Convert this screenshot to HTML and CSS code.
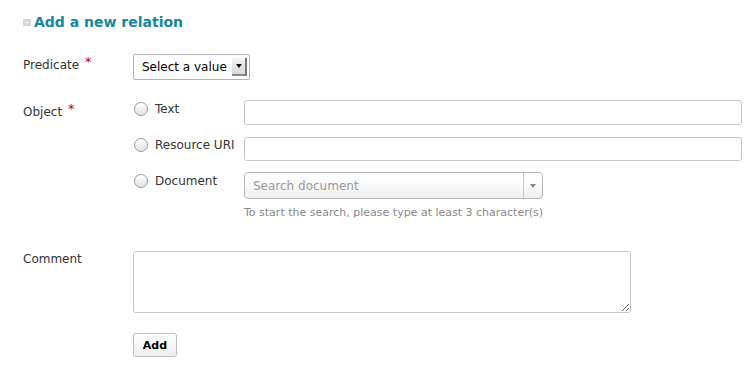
FILE: index.html
```html
<!DOCTYPE html>
<html lang="en">
<head>
  <meta charset="UTF-8">
  <title>Add a new relation</title>
  <link rel="stylesheet" href="styles.css">
</head>
<body>
  <div class="page">
    <h2 class="title"><span class="collapse-icon"></span>Add a new relation</h2>

    <div class="form-row predicate-row">
      <div class="form-label">Predicate <span class="required">*</span></div>
      <div class="form-field">
        <div class="plain-select">
          <span class="plain-select-text">Select a value</span>
          <span class="plain-select-arrow"><span class="tri"></span></span>
        </div>
      </div>
    </div>

    <div class="form-row object-row">
      <div class="form-label object-label">Object <span class="required">*</span></div>
      <div class="form-field">
        <div class="option option-text">
          <div class="radio-wrap"><span class="radio"></span><span class="radio-label">Text</span></div>
          <input type="text" class="text-input">
        </div>
        <div class="option option-uri">
          <div class="radio-wrap"><span class="radio"></span><span class="radio-label">Resource URI</span></div>
          <input type="text" class="text-input uri-input">
        </div>
        <div class="option option-doc">
          <div class="radio-wrap"><span class="radio"></span><span class="radio-label">Document</span></div>
          <div class="doc-field">
            <div class="search-select">
              <span class="search-placeholder">Search document</span>
              <span class="search-arrow"><span class="tri small"></span></span>
            </div>
            <div class="help">To start the search, please type at least 3 character(s)</div>
          </div>
        </div>
      </div>
    </div>

    <div class="form-row comment-row">
      <div class="form-label comment-label">Comment</div>
      <div class="form-field">
        <textarea class="comment"></textarea>
      </div>
    </div>

    <div class="form-row actions">
      <div class="form-label"></div>
      <div class="form-field"><button class="add-button">Add</button></div>
    </div>
  </div>
</body>
</html>
```

FILE: styles.css
```css
/* base */
body {
  margin: 0;
  font-family: "DejaVu Sans", "Noto Sans", sans-serif;
  font-size: 12px;
  color: #333;
  background: #ffffff;
}

.page {
  padding: 12px 14px 0 23px;
}

.title {
  margin: 0;
  font-size: 14px;
  line-height: 20px;
  font-weight: bold;
  color: #17869f;
  display: flex;
  align-items: center;
}

.collapse-icon {
  width: 8px;
  height: 7px;
  background: #d9d9d9;
  margin: 1px 3px 0 0;
  position: relative;
}

.collapse-icon::after {
  content: "";
  position: absolute;
  left: 2px;
  right: 2px;
  top: 3px;
  height: 1px;
  background: #f4f4f4;
}

/* rows */
.form-row {
  display: grid;
  grid-template-columns: 110px 1fr;
  align-items: start;
}

.form-label {
  line-height: 16px;
  color: #333;
}

.required {
  color: #c00000;
  font-size: 13px;
  margin-left: 2px;
  vertical-align: 3px;
}

.predicate-row {
  margin-top: 22px;
}

.plain-select {
  height: 24px;
  border: 1px solid #b3b3b3;
  border-radius: 2px;
  display: flex;
  align-items: center;
  justify-content: space-between;
  padding: 0 2px 0 8px;
  box-sizing: content-box;
  width: 105px;
  color: #000;
}

.plain-select-arrow {
  width: 13px;
  height: 16px;
  background: linear-gradient(#f4f4f4, #d8d8d8);
  border-right: 2px solid #777;
  border-bottom: 2px solid #888;
  display: flex;
  align-items: center;
  justify-content: center;
}

.tri {
  width: 0;
  height: 0;
  border-left: 3px solid transparent;
  border-right: 3px solid transparent;
  border-top: 4px solid #000;
}

.tri.small {
  border-top-color: #888;
}

/* object options */
.object-row {
  margin-top: 20px;
}

.object-label {
  padding-top: 1px;
}

.option {
  display: flex;
  align-items: flex-start;
}

.option-uri {
  margin-top: 12px;
}

.option-doc {
  margin-top: 11px;
}

.radio-wrap {
  width: 111px;
  display: flex;
  align-items: center;
  height: 18px;
}

.option-uri .radio-wrap {
  height: 15px;
}

.radio {
  width: 12px;
  height: 12px;
  border: 1px solid #9a9a9a;
  border-radius: 50%;
  background: linear-gradient(#ffffff, #e2e2e2);
  margin: 0 7px 0 1px;
  flex-shrink: 0;
}

.radio-label {
  font-size: 12px;
  color: #333;
}

.text-input {
  width: 498px;
  height: 25px;
  box-sizing: border-box;
  border: 1px solid #c6c6c6;
  border-radius: 3px;
  margin: 0;
  padding: 0 6px;
}

.uri-input {
  height: 24px;
}

.search-select {
  width: 299px;
  height: 27px;
  box-sizing: border-box;
  border: 1px solid #b8b8b8;
  border-radius: 4px;
  background: linear-gradient(#ffffff 20%, #efefef);
  display: flex;
  align-items: center;
  justify-content: space-between;
}

.search-placeholder {
  padding-left: 8px;
  color: #999;
  font-size: 12px;
}

.search-arrow {
  width: 18px;
  height: 25px;
  border-left: 1px solid #c8c8c8;
  display: flex;
  align-items: center;
  justify-content: center;
}

.help {
  margin-top: 6px;
  font-size: 11px;
  line-height: 15px;
  color: #888;
}

/* comment */
.comment-row {
  margin-top: 31px;
}

.comment {
  display: block;
  width: 498px;
  height: 62px;
  box-sizing: border-box;
  border: 1px solid #c6c6c6;
  border-radius: 3px;
  margin: 0;
}

.actions {
  margin-top: 20px;
}

.add-button {
  width: 44px;
  height: 24px;
  border: 1px solid #bcbcbc;
  border-radius: 3px;
  background: linear-gradient(#ffffff, #efefef);
  font-family: "DejaVu Sans", sans-serif;
  font-size: 11px;
  font-weight: bold;
  color: #000;
  padding: 0;
}
```
